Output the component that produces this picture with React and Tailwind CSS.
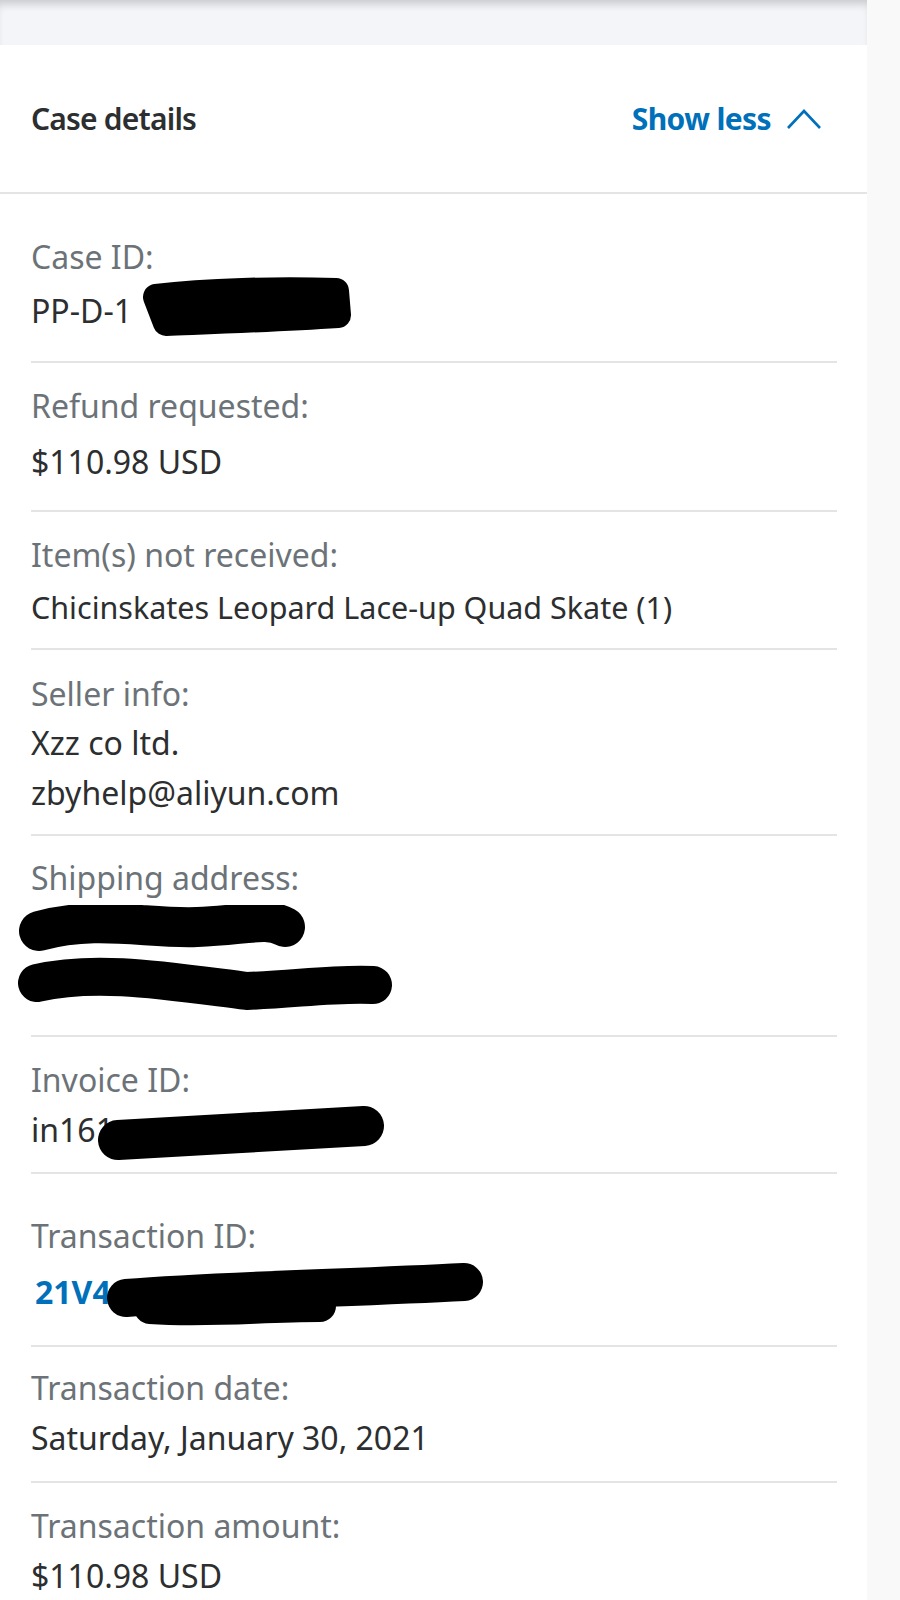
import React from 'react';

const rows = [
    { label: 'Case ID:', pad: 'pt-[39px] pb-[24px]', mt: 'mt-[4px]', lines: ['PP-D-1'], redact: 'case' },
    { label: 'Refund requested:', pad: 'pt-[19px] pb-[22px]', mt: 'mt-[6px]', lines: ['$110.98 USD'] },
    { label: 'Item(s) not received:', pad: 'pt-[19px] pb-[15px]', mt: 'mt-[2px]', lines: ['Chicinskates Leopard Lace-up Quad Skate (1)'], size: 'text-[30.5px]' },
    { label: 'Seller info:', pad: 'pt-[20px] pb-[16px]', mt: '', lines: ['Xzz co ltd.', 'zbyhelp@aliyun.com'] },
    { label: 'Shipping address:', pad: 'pt-[18px] pb-[33px]', mt: '', lines: ['\u00a0', '\u00a0'], redact: 'ship' },
    { label: 'Invoice ID:', pad: 'pt-[19px] pb-[16px]', mt: '', lines: ['in161'], redact: 'invoice' },
    { label: 'Transaction ID:', pad: 'pt-[38px] pb-[27px]', mt: 'mt-[6px]', lines: ['21V4'], link: true, redact: 'txn' },
    { label: 'Transaction date:', pad: 'pt-[17px] pb-[17px]', mt: '', lines: ['Saturday, January 30, 2021'] },
    { label: 'Transaction amount:', pad: 'pt-[19px] pb-[20px]', mt: '', lines: ['$110.98 USD'] },
];

function Scribble({ kind }) {
    // black marker redactions drawn over the values
    if (kind === 'case') {
        return (
            <svg className="absolute left-[95px] top-[-10px]" width="240" height="70" viewBox="0 0 240 70">
                <path d="M30 22 C80 16 150 14 210 16 L212 40 C150 44 90 46 40 48 Z" fill="#000" stroke="#000" strokeWidth="26" strokeLinejoin="round" strokeLinecap="round" />
            </svg>
        );
    }
    if (kind === 'ship') {
        return (
            <svg className="absolute left-[-14px] top-[3px]" width="400" height="130" viewBox="0 0 400 130">
                <path d="M22 26 C80 10 130 24 180 22 C230 20 250 12 268 22" fill="none" stroke="#000" strokeWidth="40" strokeLinecap="round" />
                <path d="M20 78 C80 64 150 76 230 86 C280 84 320 78 356 80" fill="none" stroke="#000" strokeWidth="38" strokeLinecap="round" />
            </svg>
        );
    }
    if (kind === 'invoice') {
        return (
            <svg className="absolute left-[55px] top-[-8px]" width="320" height="80" viewBox="0 0 320 80">
                <path d="M32 44 C110 40 200 34 278 30" fill="none" stroke="#000" strokeWidth="40" strokeLinecap="round" />
            </svg>
        );
    }
    return (
        <svg className="absolute left-[59px] top-[-8px]" width="410" height="80" viewBox="0 0 410 80">
            <path d="M36 40 C140 32 260 30 374 24" fill="none" stroke="#000" strokeWidth="38" strokeLinecap="round" />
            <path d="M60 50 C120 54 170 48 230 48" fill="none" stroke="#000" strokeWidth="32" strokeLinecap="round" />
        </svg>
    );
}

export default function App() {
    return (
        <div className="w-[900px] h-[1600px] bg-[#f9f9fa] flex overflow-hidden" style={{ fontFamily: '"Noto Sans", "Open Sans", sans-serif' }}>
            <div className="w-[867px] shrink-0 flex flex-col bg-white">
                {/* top band */}
                <div className="h-[45px] shrink-0 bg-[#f4f5f8] shadow-[inset_0_8px_8px_-4px_rgba(0,0,0,0.18)]" />

                {/* header */}
                <div className="h-[149px] shrink-0 flex items-center justify-between pl-[31px] pr-[45px] border-b-2 border-[#e3e4e6]">
                    <h2 className="text-[30px] font-semibold text-[#2c2e2f] tracking-[-0.8px]">Case details</h2>
                    <button className="flex items-center gap-[15px] text-[30px] font-bold text-[#0070ba] tracking-[-0.6px]">
                        Show less
                        <svg width="36" height="22" viewBox="0 0 36 22" fill="none">
                            <polyline points="2,20 18,3 34,20" stroke="#0070ba" strokeWidth="2.6" />
                        </svg>
                    </button>
                </div>

                {/* detail rows */}
                <div className="shrink-0 pl-[31px] pr-[30px]">
                    {rows.map((row, i) => (
                        <div key={i} className={`${row.pad} ${i < rows.length - 1 ? 'border-b-2 border-[#e3e4e6]' : ''}`}>
                            <div className="text-[32px] leading-[48px] text-[#6c7378]">{row.label}</div>
                            {row.lines.map((line, j) => (
                                <div
                                    key={j}
                                    className={`relative ${row.size || 'text-[32px]'} ${j === 0 ? row.mt : ''} ${
                                        row.lines.length > 1 ? 'leading-[50px]' : 'leading-[52px]'
                                    } ${row.link ? 'font-bold text-[#0070ba] pl-[4px]' : 'text-[#2c2e2f]'}`}
                                >
                                    {line}
                                    {row.redact && j === 0 && <Scribble kind={row.redact} />}
                                </div>
                            ))}
                        </div>
                    ))}
                </div>
            </div>
        </div>
    );
}
